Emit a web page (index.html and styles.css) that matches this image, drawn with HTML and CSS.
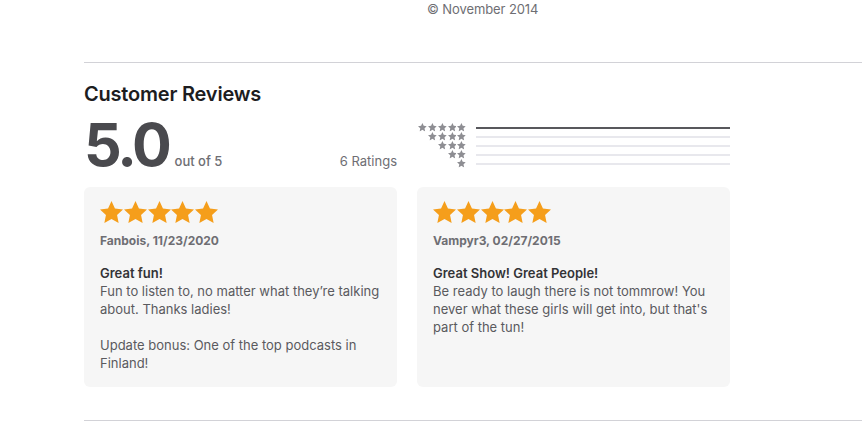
FILE: index.html
```html
<!DOCTYPE html>
<html>
<head>
<meta charset="utf-8">
<link rel="stylesheet" href="styles.css">
</head>
<body>
<svg width="0" height="0" class="defs">
  <defs>
    <symbol id="star" viewBox="1.8 1.6 20.4 19.4"><path d="M12 1.6l3.05 6.55 7.15.85-5.27 4.9 1.4 7.1L12 17.45 5.67 21l1.4-7.1L1.8 9l7.15-.85z"/></symbol>
  </defs>
</svg>
<div class="copyright">© November 2014</div>
<hr class="rule rule-top">
<section class="reviews">
  <h2 class="title">Customer Reviews</h2>
  <div class="summary">
    <div class="score">
      <span class="big">5.0</span>
      <span class="outof">out of 5</span>
      <span class="count">6 Ratings</span>
    </div>
    <div class="histogram">
      <div class="hrow"><div class="hstars"><svg><use href="#star"/></svg><svg><use href="#star"/></svg><svg><use href="#star"/></svg><svg><use href="#star"/></svg><svg><use href="#star"/></svg></div><div class="bar full"></div></div>
      <div class="hrow"><div class="hstars"><svg><use href="#star"/></svg><svg><use href="#star"/></svg><svg><use href="#star"/></svg><svg><use href="#star"/></svg></div><div class="bar"></div></div>
      <div class="hrow"><div class="hstars"><svg><use href="#star"/></svg><svg><use href="#star"/></svg><svg><use href="#star"/></svg></div><div class="bar"></div></div>
      <div class="hrow"><div class="hstars"><svg><use href="#star"/></svg><svg><use href="#star"/></svg></div><div class="bar"></div></div>
      <div class="hrow"><div class="hstars"><svg><use href="#star"/></svg></div><div class="bar"></div></div>
    </div>
  </div>
  <div class="cards">
    <article class="card">
      <div class="stars"><svg><use href="#star"/></svg><svg><use href="#star"/></svg><svg><use href="#star"/></svg><svg><use href="#star"/></svg><svg><use href="#star"/></svg></div>
      <div class="author">Fanbois, 11/23/2020</div>
      <div class="rtitle">Great fun!</div>
      <p class="body">Fun to listen to, no matter what they’re talking about. Thanks ladies!<br><br>Update bonus: One of the top podcasts in Finland!</p>
    </article>
    <article class="card">
      <div class="stars"><svg><use href="#star"/></svg><svg><use href="#star"/></svg><svg><use href="#star"/></svg><svg><use href="#star"/></svg><svg><use href="#star"/></svg></div>
      <div class="author">Vampyr3, 02/27/2015</div>
      <div class="rtitle">Great Show! Great People!</div>
      <p class="body">Be ready to laugh there is not tommrow! You never what these girls will get into, but that's part of the tun!</p>
    </article>
  </div>
</section>
<hr class="rule rule-bottom">
</body>
</html>
```
FILE: styles.css
```css
* { box-sizing: border-box; }
html, body { margin: 0; padding: 0; background: #fff; }
body {
  font-family: Inter, "Noto Sans", "Liberation Sans", sans-serif;
  color: #1d1d1f;
  width: 862px;
  overflow: hidden;
}
.defs { position: absolute; }
.copyright {
  font-size: 13px;
  line-height: 18px;
  color: #6e6e73;
  padding-left: 427px;
  letter-spacing: -0.1px;
}
.rule {
  border: 0;
  height: 1px;
  background: #d2d2d7;
  margin: 0 0 0 84px;
}
.rule-top { margin-top: 44px; }
.rule-bottom { margin-top: 33px; }
.reviews {
  margin-left: 84px;
  width: 646px;
}
.title {
  margin: 18px 0 0;
  font-size: 20px;
  line-height: 26px;
  font-weight: 600;
  letter-spacing: -0.2px;
  color: #1d1d1f;
}
.summary {
  margin-top: 8px;
  display: flex;
  gap: 20px;
  height: 60px;
}
.score {
  width: 313px;
  display: flex;
  align-items: baseline;
}
.big {
  font-size: 59px;
  line-height: 60px;
  font-weight: 700;
  color: #4a4a4e;
  letter-spacing: -3.2px;
}
.outof {
  font-size: 13px;
  color: #6e6e73;
  margin-left: 6px;
  font-weight: 500;
}
.count {
  margin-left: auto;
  font-size: 13px;
  color: #6e6e73;
}
.histogram {
  width: 313px;
  padding-top: 8px;
  display: flex;
  flex-direction: column;
}
.hrow {
  height: 9px;
  display: flex;
  align-items: center;
}
.hstars {
  width: 49px;
  display: flex;
  justify-content: flex-end;
  gap: 0.9px;
  fill: #8e8e93;
}
.hstars svg { width: 8.8px; height: 8.4px; }
.bar {
  margin-left: 10px;
  width: 254px;
  height: 2px;
  background: #e8e8ed;
}
.bar.full { background: #58585c; }
.cards {
  margin-top: 12px;
  display: flex;
  gap: 20px;
}
.card {
  width: 313px;
  height: 200px;
  background: #f6f6f6;
  border-radius: 6px;
  padding: 14px 16px 13px;
}
.stars {
  display: flex;
  height: 22px;
  gap: 0.8px;
  fill: #f59e1b;
}
.stars svg { width: 23px; height: 22px; }
.author {
  margin-top: 9px;
  font-size: 12px;
  line-height: 18px;
  font-weight: 700;
  color: #6e6e73;
}
.rtitle {
  margin-top: 14px;
  font-size: 13px;
  line-height: 18px;
  font-weight: 600;
  color: #333336;
}
.body {
  margin: 0;
  font-size: 13px;
  line-height: 18px;
  color: #5a5a5e;
}
```
